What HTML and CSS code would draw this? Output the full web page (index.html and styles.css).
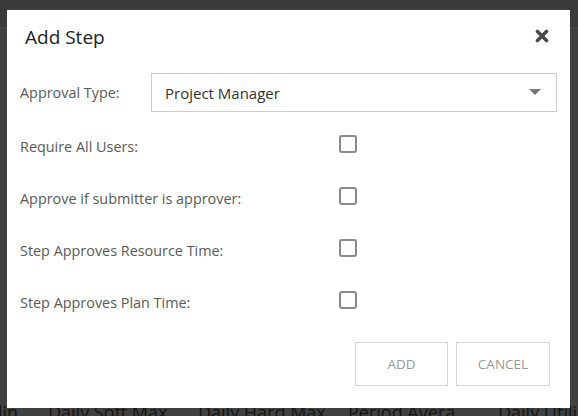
FILE: index.html
```html
<!DOCTYPE html>
<html lang="en">
<head>
    <meta charset="UTF-8">
    <meta content="width=device-width, initial-scale=1.0" name="viewport">
    <link rel="stylesheet" href="styles.css">
</head>
<body>
    <!-- Page behind the overlay -->
    <div id="pageBehind">
        <div class="topBar"></div>
        <div class="gridHeader">
            <span class="colHead colFirst">lin</span>
            <span class="colHead">Daily Soft Max</span>
            <span class="colHead">Daily Hard Max</span>
            <span class="colHead">Period Avera...</span>
            <span class="colHead">Daily Utili</span>
        </div>
    </div>

    <!-- Add Step dialog -->
    <div id="addStepDialog">
        <div class="dialogHeader">
            <h2 class="dialogTitle">Add Step</h2>
            <span class="closeBtn">
                <svg width="14" height="14" viewBox="0 0 14 14">
                    <path d="M2.5 2.5 L11.5 11.5 M11.5 2.5 L2.5 11.5" stroke="#4a4a4a" stroke-width="3.6" stroke-linecap="round" fill="none"/>
                </svg>
            </span>
        </div>

        <div class="dialogBody">
            <div class="formRow selectRow">
                <label class="fieldLabel">Approval Type:</label>
                <div class="selectBox">
                    <span>Project Manager</span>
                    <span class="caret"></span>
                </div>
            </div>

            <div class="formRow checkRow">
                <label class="fieldLabel">Require All Users:</label>
                <span class="checkBox"></span>
            </div>

            <div class="formRow checkRow">
                <label class="fieldLabel">Approve if submitter is approver:</label>
                <span class="checkBox"></span>
            </div>

            <div class="formRow checkRow">
                <label class="fieldLabel">Step Approves Resource Time:</label>
                <span class="checkBox"></span>
            </div>

            <div class="formRow checkRow">
                <label class="fieldLabel">Step Approves Plan Time:</label>
                <span class="checkBox"></span>
            </div>
        </div>

        <div class="dialogFooter">
            <button class="dlgBtn addBtn" type="button">ADD</button>
            <button class="dlgBtn cancelBtn" type="button">CANCEL</button>
        </div>
    </div>
</body>
</html>
```

FILE: styles.css
```css
body {
    font-family: "Open Sans", "Noto Sans", sans-serif;
    margin: 0;
    background-color: #404040;
    height: 416px;
    overflow: hidden;
}

#pageBehind {
    position: relative;
    height: 416px;
}

.topBar {
    height: 27px;
    background-color: #3b3b3b;
    border-bottom: 1px solid #474747;
}

.gridHeader {
    display: flex;
    padding-top: 372px;
    font-family: "Open Sans", sans-serif;
    font-size: 18px;
    color: #141414;
    white-space: nowrap;
}

.colHead {
    width: 150px;
    flex: none;
}

.colFirst {
    width: 50px;
    margin-left: -2px;
}

/* dialog sits on top of the dimmed page */
#addStepDialog {
    position: absolute;
    left: 7px;
    top: 10px;
    width: 563px;
    height: 398px;
    background-color: white;
    box-sizing: border-box;
    display: flex;
    flex-direction: column;
}

.dialogHeader {
    display: flex;
    align-items: center;
    justify-content: space-between;
    padding: 12px 21px 0 18px;
    height: 30px;
}

.dialogTitle {
    margin: 0;
    font-size: 19px;
    font-weight: normal;
    color: #222;
}

.closeBtn {
    display: flex;
    margin-top: -2px;
}

.dialogBody {
    padding: 21px 13px 0 13px;
}

.formRow {
    display: flex;
    align-items: center;
}

.fieldLabel {
    font-size: 14.4px;
    color: #5a5a5a;
}

.selectRow .fieldLabel {
    width: 131px;
    flex: none;
}

.selectBox {
    flex: 1;
    height: 39px;
    border: 1px solid #ccc;
    box-sizing: border-box;
    display: flex;
    align-items: center;
    justify-content: space-between;
    padding: 0 15px 0 13px;
    font-size: 15px;
    color: #333;
}

.caret {
    width: 0;
    height: 0;
    border-left: 6px solid transparent;
    border-right: 6px solid transparent;
    border-top: 6px solid #777;
    margin-top: -1px;
}

.checkRow {
    height: 52px;
}

.checkRow:nth-child(2) {
    margin-top: 8px;
}

.checkRow .fieldLabel {
    width: 319px;
    flex: none;
}

.checkBox {
    width: 14px;
    height: 14px;
    border: 2px solid #8a8a8a;
    border-radius: 3px;
    margin-top: -4px;
}

.dialogFooter {
    margin-top: auto;
    display: flex;
    justify-content: flex-end;
    gap: 8px;
    padding: 0 20px 22px 0;
}

.dlgBtn {
    height: 44px;
    background-color: white;
    border: 1px solid #d6d6d6;
    font-family: "Open Sans", sans-serif;
    font-size: 13.5px;
    color: #999;
    cursor: pointer;
}

.addBtn {
    width: 93px;
}

.cancelBtn {
    width: 94px;
}
```
